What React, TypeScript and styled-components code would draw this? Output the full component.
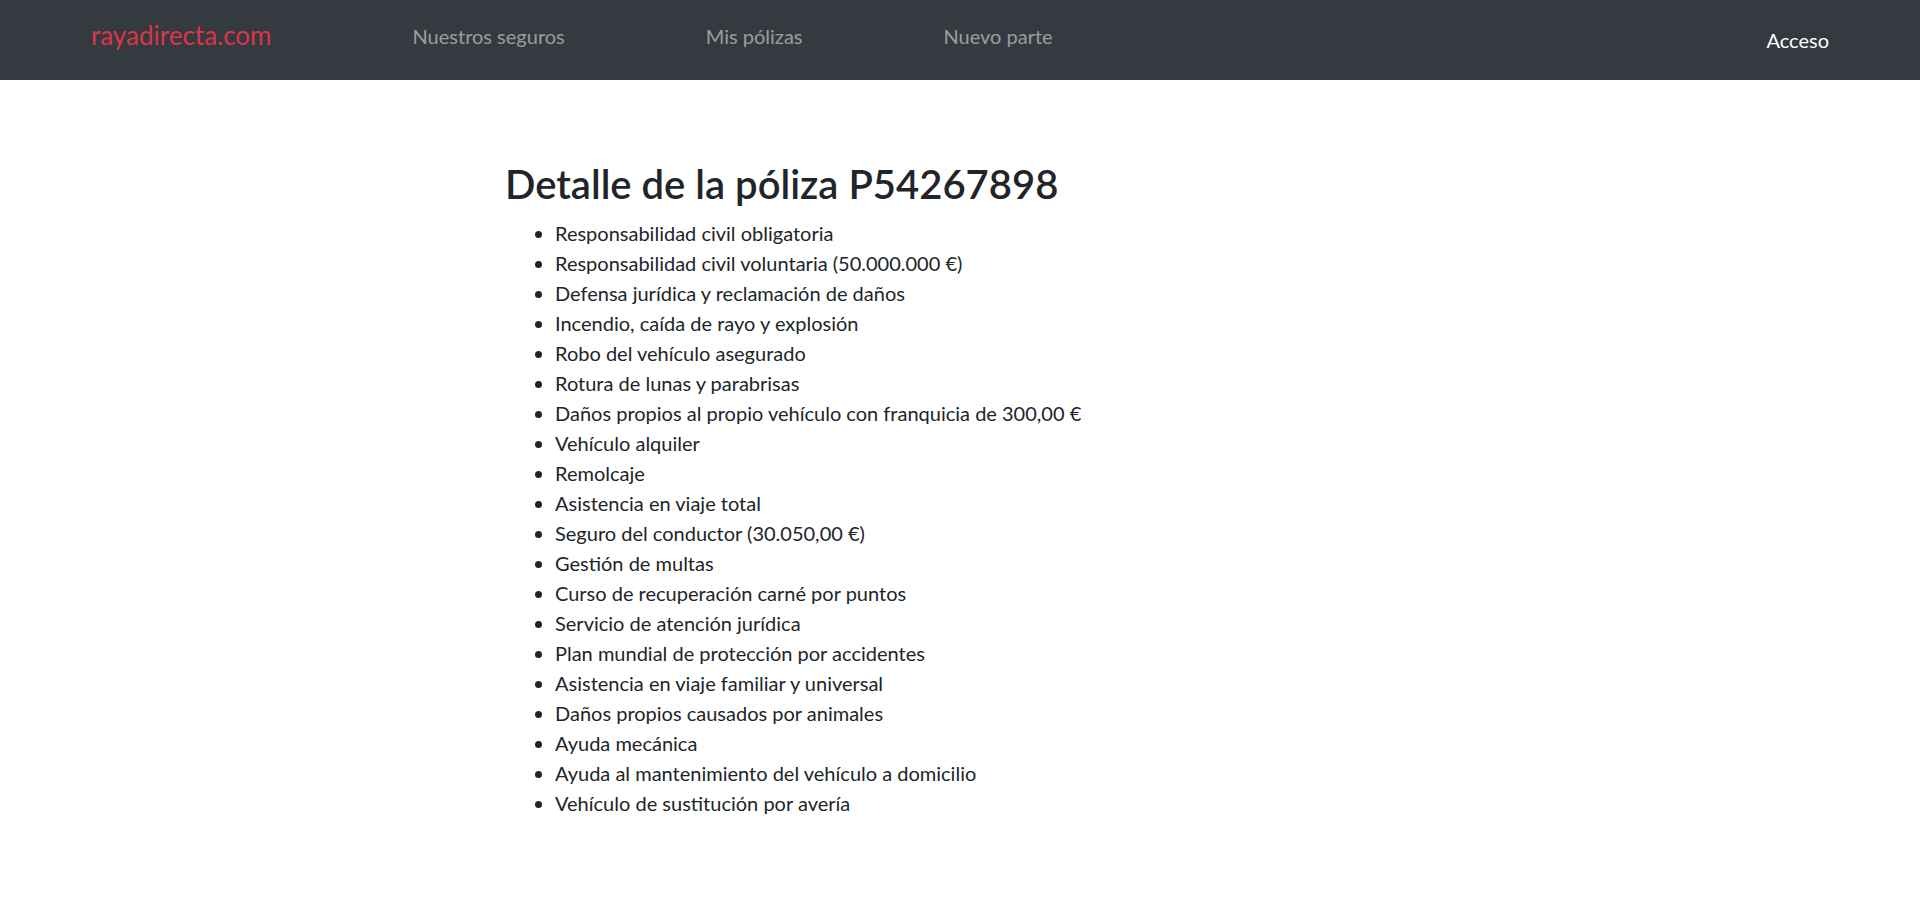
import React from "react";
import styled, { createGlobalStyle } from "styled-components";

const FONT = `Lato, "Segoe UI", "Open Sans", sans-serif`;

const Global = createGlobalStyle`
  html, body { margin: 0; padding: 0; background: #fff; }
  body { font-family: ${FONT}; font-size: 20px; line-height: 1.5; color: #212529; }
`;

const Nav = styled.nav`
  height: 80px;
  background: #343a40;
  display: flex;
  align-items: center;
  padding: 0 91px;
  box-sizing: border-box;
`;
const Brand = styled.a`
  color: #dc3545;
  font-size: 26px;
  line-height: 1.5;
  text-decoration: none;
  margin-right: 141px;
  margin-bottom: 10px;
`;
const Links = styled.div`
  display: flex;
  gap: 141px;
  flex: 1;
  margin-bottom: 9px;
`;
const NavLink = styled.a`
  color: rgba(255, 255, 255, 0.5);
  font-size: 20px;
  line-height: 30px;
  text-decoration: none;
`;
const Login = styled.a`
  color: #fff;
  font-size: 20px;
  line-height: 30px;
  text-decoration: none;
`;
const Main = styled.main`
  padding: 80px 0 40px 505px;
`;
const Title = styled.h2`
  font-size: 40px;
  font-weight: 600;
  line-height: 1.2;
  margin: 0 0 10px;
`;
const List = styled.ul`
  margin: 0;
  padding-left: 50px;
`;
const Item = styled.li`
  line-height: 30px;
`;

const items = [
  "Responsabilidad civil obligatoria",
  "Responsabilidad civil voluntaria (50.000.000 €)",
  "Defensa jurídica y reclamación de daños",
  "Incendio, caída de rayo y explosión",
  "Robo del vehículo asegurado",
  "Rotura de lunas y parabrisas",
  "Daños propios al propio vehículo con franquicia de 300,00 €",
  "Vehículo alquiler",
  "Remolcaje",
  "Asistencia en viaje total",
  "Seguro del conductor (30.050,00 €)",
  "Gestión de multas",
  "Curso de recuperación carné por puntos",
  "Servicio de atención jurídica",
  "Plan mundial de protección por accidentes",
  "Asistencia en viaje familiar y universal",
  "Daños propios causados por animales",
  "Ayuda mecánica",
  "Ayuda al mantenimiento del vehículo a domicilio",
  "Vehículo de sustitución por avería",
];

export default function App() {
  return (
    <>
      <Global />
      <Nav>
        <Brand href="#">rayadirecta.com</Brand>
        <Links>
          <NavLink href="#">Nuestros seguros</NavLink>
          <NavLink href="#">Mis pólizas</NavLink>
          <NavLink href="#">Nuevo parte</NavLink>
        </Links>
        <Login href="#">Acceso</Login>
      </Nav>
      <Main>
        <Title>Detalle de la póliza P54267898</Title>
        <List>
          {items.map((t) => (
            <Item key={t}>{t}</Item>
          ))}
        </List>
      </Main>
    </>
  );
}
